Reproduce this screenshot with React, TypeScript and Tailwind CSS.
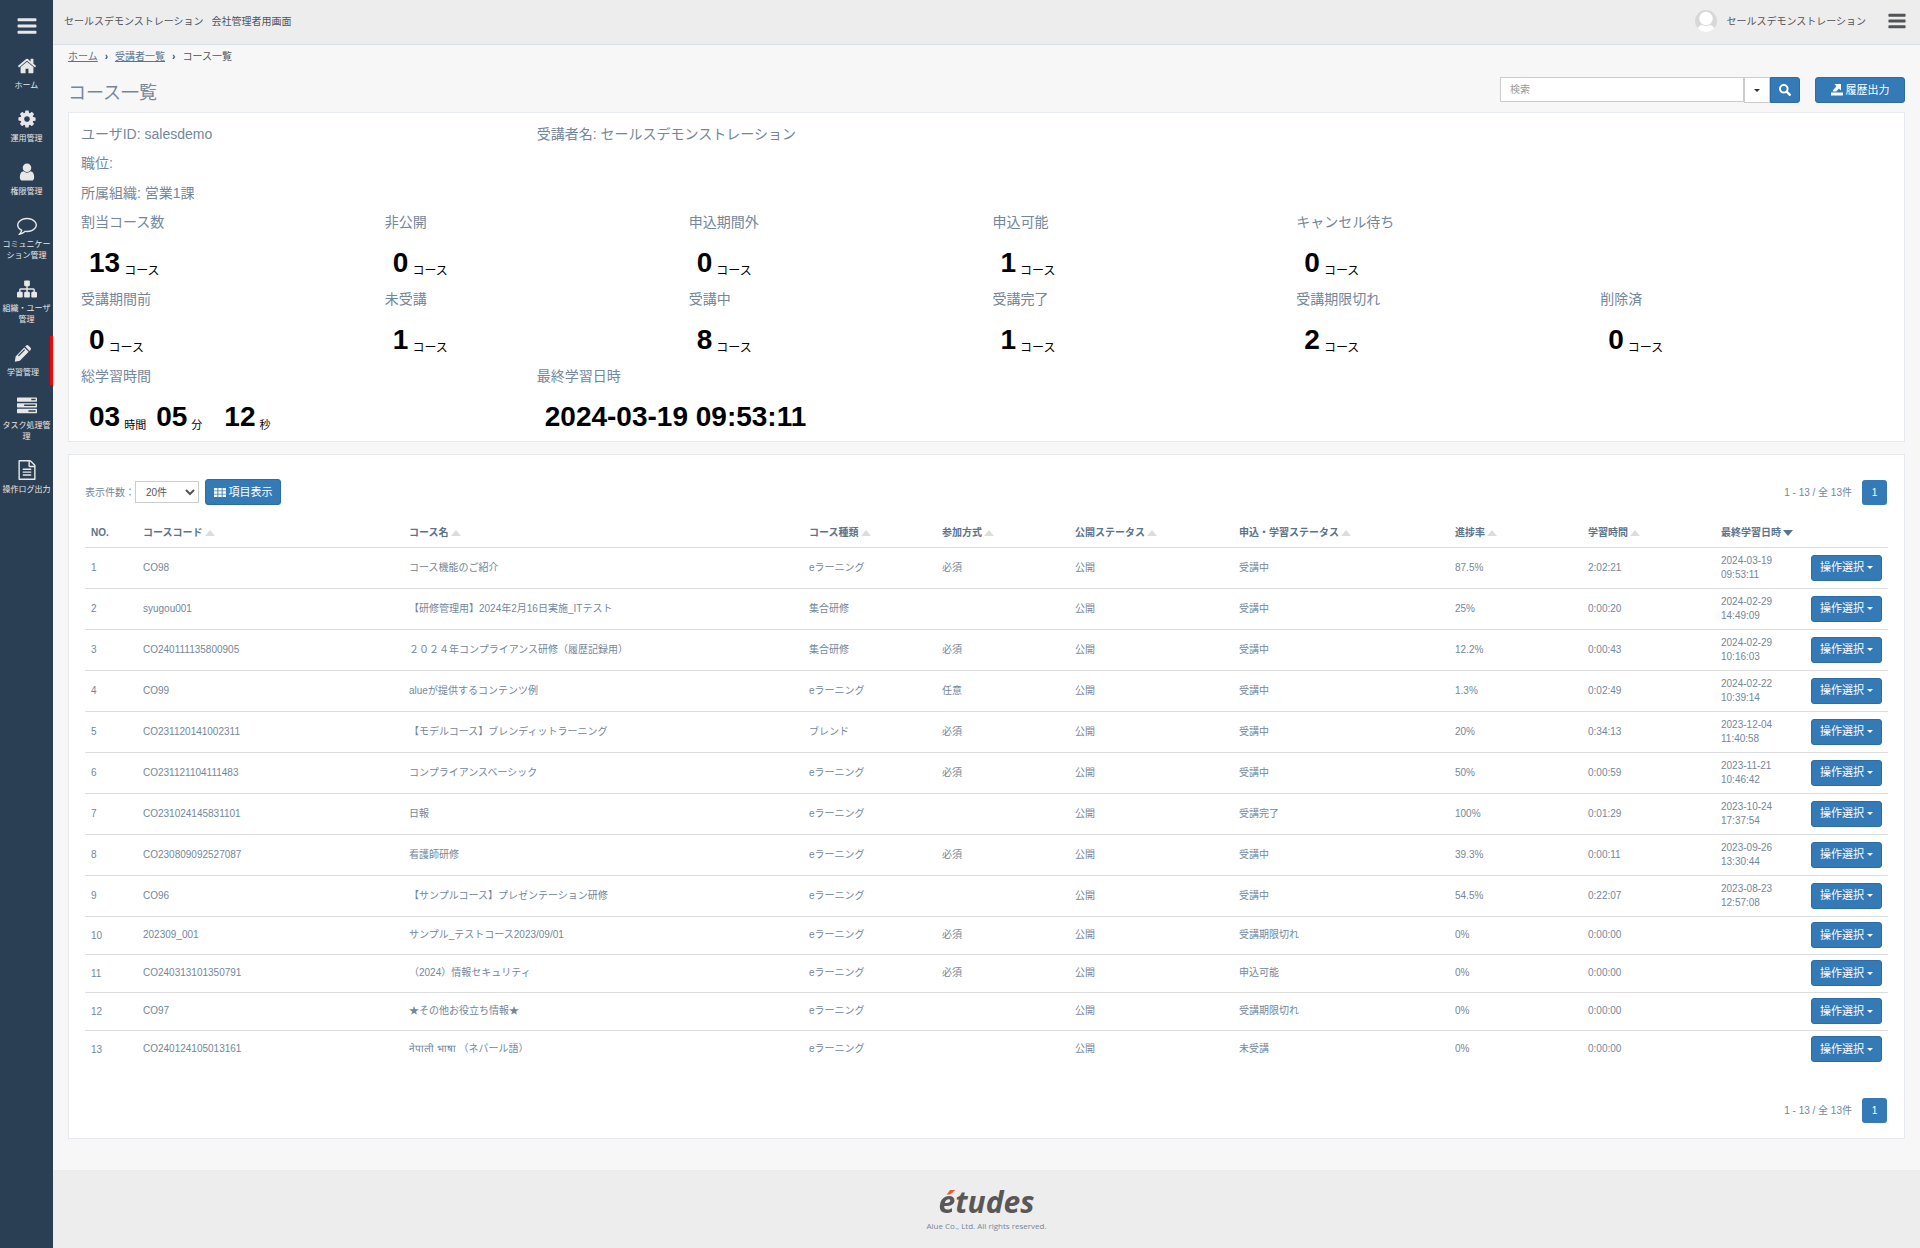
import type { ReactNode } from "react";

const paths = {
    bars: "M1664 1344v128q0 26-19 45t-45 19h-1408q-26 0-45-19t-19-45v-128q0-26 19-45t45-19h1408q26 0 45 19t19 45zm0-512v128q0 26-19 45t-45 19h-1408q-26 0-45-19t-19-45v-128q0-26 19-45t45-19h1408q26 0 45 19t19 45zm0-512v128q0 26-19 45t-45 19h-1408q-26 0-45-19t-19-45v-128q0-26 19-45t45-19h1408q26 0 45 19t19 45z",
    home: "M1472 992v480q0 26-19 45t-45 19h-384v-384h-256v384h-384q-26 0-45-19t-19-45v-480q0-1 .5-3t.5-3l575-474 575 474q1 2 1 6zm223-69l-62 74q-8 9-21 11h-3q-13 0-21-7l-692-577-692 577q-12 8-24 7-13-2-21-11l-62-74q-8-10-7-23.5t11-21.5l719-599q32-26 76-26t76 26l244 204v-195q0-14 9-23t23-9h192q14 0 23 9t9 23v408l219 182q10 8 11 21.5t-7 23.5z",
    cog: "M1152 896q0-106-75-181t-181-75-181 75-75 181 75 181 181 75 181-75 75-181zm512-109v222q0 12-8 23t-20 13l-185 28q-19 54-39 91 35 50 107 138 10 12 10 25t-9 23q-27 37-99 108t-94 71q-12 0-26-9l-138-108q-44 23-91 38-16 136-29 186-7 28-36 28h-222q-14 0-24.5-8.5t-11.5-21.5l-28-184q-49-16-90-37l-141 107q-10 9-25 9-14 0-25-11-126-114-165-168-7-10-7-23 0-12 8-23 15-21 51-66.5t54-70.5q-27-50-41-99l-183-27q-13-2-21-12.5t-8-23.5v-222q0-12 8-23t19-13l186-28q14-46 39-92-40-57-107-138-10-12-10-24 0-10 9-23 26-36 98.5-107.5t94.5-71.5q13 0 26 10l138 107q44-23 91-38 16-136 29-186 7-28 36-28h222q14 0 24.5 8.5t11.5 21.5l28 184q49 16 90 37l142-107q9-9 24-9 13 0 25 10 129 119 165 170 7 8 7 22 0 12-8 23-15 21-51 66.5t-54 70.5q26 50 41 98l183 28q13 2 21 12.5t8 23.5z",
    user: "M1536 1399q0 109-62.5 187t-150.5 78h-854q-88 0-150.5-78t-62.5-187q0-85 8.5-160.5t31.5-152 58.5-131 94-89 134.5-34.5q131 128 313 128t313-128q76 0 134.5 34.5t94 89 58.5 131 31.5 152 8.5 160.5zm-256-887q0 159-112.5 271.5t-271.5 112.5-271.5-112.5-112.5-271.5 112.5-271.5 271.5-112.5 271.5 112.5 112.5 271.5z",
    comment: "M896 384q-204 0-381.5 69.5t-282 187.5-104.5 255q0 112 71.5 213.5t201.5 175.5l87 50-27 96q-24 91-70 172 152-63 275-171l43-38 57 6q69 8 130 8 204 0 381.5-69.5t282-187.5 104.5-255-104.5-255-282-187.5-381.5-69.5zm896 512q0 174-120 321.5t-326 233-450 85.5q-70 0-145-8-198 175-460 242-49 14-114 22h-5q-15 0-27-10.5t-16-27.5v-1q-3-4-.5-12t2-10 4.5-9.5l6-9 7-8.5 8-9q7-8 31-34.5t34.5-38 31-39.5 32.5-51 27-59 26-76q-157-89-247.5-220t-90.5-281q0-174 120-321.5t326-233 450-85.5 450 85.5 326 233 120 321.5z",
    sitemap: "M1792 1248v320q0 40-28 68t-68 28h-320q-40 0-68-28t-28-68v-320q0-40 28-68t68-28h96v-192h-512v192h96q40 0 68 28t28 68v320q0 40-28 68t-68 28h-320q-40 0-68-28t-28-68v-320q0-40 28-68t68-28h96v-192h-512v192h96q40 0 68 28t28 68v320q0 40-28 68t-68 28h-320q-40 0-68-28t-28-68v-320q0-40 28-68t68-28h96v-192q0-52 38-90t90-38h512v-192h-96q-40 0-68-28t-28-68v-320q0-40 28-68t68-28h320q40 0 68 28t28 68v320q0 40-28 68t-68 28h-96v192h512q52 0 90 38t38 90v192h96q40 0 68 28t28 68z",
    pencil: "M1180 230q90-95 190-5l205 205q90 95 0 190l-90 90-395-395zM1010 395l395 395-790 790-455 110 75-490zM1010 560l-560 560 75 75 560-560z",
    tasks: "M1024 1408h640v-128h-640v128zm-384-512h1024v-128h-1024v128zm640-512h384v-128h-384v128zm512 832v256q0 26-19 45t-45 19h-1664q-26 0-45-19t-19-45v-256q0-26 19-45t45-19h1664q26 0 45 19t19 45zm0-512v256q0 26-19 45t-45 19h-1664q-26 0-45-19t-19-45v-256q0-26 19-45t45-19h1664q26 0 45 19t19 45zm0-512v256q0 26-19 45t-45 19h-1664q-26 0-45-19t-19-45v-256q0-26 19-45t45-19h1664q26 0 45 19t19 45z",
    file: "M1596 380q28 28 48 76t20 88v1152q0 40-28 68t-68 28h-1344q-40 0-68-28t-28-68v-1600q0-40 28-68t68-28h896q40 0 88 20t76 48zm-444-244v376h376q-10-29-22-41l-313-313q-12-12-41-22zm384 1528v-1024h-416q-40 0-68-28t-28-68v-416h-768v1536h1280zm-1024-864q0-14 9-23t23-9h704q14 0 23 9t9 23v64q0 14-9 23t-23 9h-704q-14 0-23-9t-9-23v-64zm736 224q14 0 23 9t9 23v64q0 14-9 23t-23 9h-704q-14 0-23-9t-9-23v-64q0-14 9-23t23-9h704zm0 256q14 0 23 9t9 23v64q0 14-9 23t-23 9h-704q-14 0-23-9t-9-23v-64q0-14 9-23t23-9h704z",
};

type IconName = keyof typeof paths;

function Icon({ name, className }: { name: IconName; className?: string }) {
    return (
        <svg viewBox="0 0 1792 1792" fill="currentColor" fillRule={name === "pencil" ? "evenodd" : "nonzero"} aria-hidden="true" className={className}>
            <path d={paths[name]} />
        </svg>
    );
}

const menu: { icon: IconName; lines: string[]; active?: boolean }[] = [
    { icon: "home", lines: ["ホーム"] },
    { icon: "cog", lines: ["運用管理"] },
    { icon: "user", lines: ["権限管理"] },
    { icon: "comment", lines: ["コミュニケー", "ション管理"] },
    { icon: "sitemap", lines: ["組織・ユーザ", "管理"] },
    { icon: "pencil", lines: ["学習管理"], active: true },
    { icon: "tasks", lines: ["タスク処理管", "理"] },
    { icon: "file", lines: ["操作ログ出力"] },
];

function Sidebar() {
    return (
        <nav className="w-[53px] shrink-0 bg-[#2a3f54] text-[#e7e7e7]">
            <button type="button" aria-label="メニュー" className="flex h-[45px] w-full items-center justify-center pt-[6px]">
                <Icon name="bars" className="h-[22px] w-[22px]" />
            </button>
            {menu.map((item) => (
                <a
                    key={item.icon}
                    href="#"
                    className={`my-1 flex flex-col items-center border-r-3 pt-[6px] pb-[7px] text-[8px] leading-[11px] ${item.active ? "border-[#ff0000] pr-1" : "border-transparent pl-[3px]"}`}
                >
                    <Icon name={item.icon} className="mb-[3px] h-[22px] w-5" />
                    {item.lines.map((line) => (
                        <span key={line} className="whitespace-nowrap">{line}</span>
                    ))}
                </a>
            ))}
        </nav>
    );
}

function Header() {
    return (
        <header className="flex h-[45px] items-center justify-between border-b border-[#d9dee4] bg-[#ededed] pr-[13px] pb-[2px] pl-[11px] text-[10px] text-[#515356]">
            <div className="flex gap-2">
                <span>セールスデモンストレーション</span>
                <span>会社管理者用画面</span>
            </div>
            <div className="flex items-center">
                <svg viewBox="0 0 22 22" className="mr-[9px] h-[22px] w-[22px]" aria-hidden="true">
                    <clipPath id="avatar"><circle cx="11" cy="11" r="11" /></clipPath>
                    <g clipPath="url(#avatar)">
                        <rect width="22" height="22" fill="#d8d8d8" />
                        <circle cx="11" cy="8.5" r="6.7" fill="#fff" />
                        <path d="M2 22c0-4 2.500-7 5-7 2.500 1.500 5.500 1.500 8 0 2.500 0 5 3 5 7z" fill="#fff" />
                    </g>
                </svg>
                <span>セールスデモンストレーション</span>
                <button type="button" aria-label="設定" className="ml-[21px]">
                    <Icon name="bars" className="h-5 w-5" />
                </button>
            </div>
        </header>
    );
}

function Caret() {
    return <span className="inline-block border-x-3 border-t-3 border-x-transparent border-t-current" />;
}

const blueButton = "flex h-[26px] items-center justify-center gap-[3px] rounded-[3px] border border-[#2e6da4] bg-[#337ab7] text-[11px] text-white";

function Stat({ label, children }: { label: string; children: ReactNode }) {
    return (
        <div>
            <dt className="leading-5">{label}</dt>
            <dd className="pt-[5px] pl-2 text-[28px] leading-[52px] font-bold text-black">{children}</dd>
        </div>
    );
}

function Unit({ children, small }: { children: string; small?: boolean }) {
    return <sub className={`ml-1 font-normal ${small ? "text-[11px]" : "text-xs"}`}>{children}</sub>;
}

const counts: [string, number][][] = [
    [["割当コース数", 13], ["非公開", 0], ["申込期間外", 0], ["申込可能", 1], ["キャンセル待ち", 0]],
    [["受講期間前", 0], ["未受講", 1], ["受講中", 8], ["受講完了", 1], ["受講期限切れ", 2], ["削除済", 0]],
];

function Summary() {
    return (
        <section className="mb-3 h-[330px] border border-[#e6e9ed] bg-white pl-3 text-sm text-[#73879c]">
            <div className="grid grid-cols-4 pt-[6px] leading-[30px]">
                <p>ユーザID: salesdemo</p>
                <p>受講者名: セールスデモンストレーション</p>
            </div>
            <p className="leading-[29px]">職位:</p>
            <p className="mb-1 leading-[30px]">所属組織: 営業1課</p>
            {counts.map((row) => (
                <dl key={row[0][0]} className="grid grid-cols-6">
                    {row.map(([label, n]) => (
                        <Stat key={label} label={label}>{n}<Unit>コース</Unit></Stat>
                    ))}
                </dl>
            ))}
            <dl className="grid grid-cols-4">
                <Stat label="総学習時間">
                    03<Unit small>時間</Unit>
                    <span className="ml-[10px]">05</span><Unit small>分</Unit>
                    <span className="ml-[22px]">12</span><Unit small>秒</Unit>
                </Stat>
                <Stat label="最終学習日時">2024-03-19 09:53:11</Stat>
            </dl>
        </section>
    );
}

const columns = [
    { label: "NO.", width: "w-[52px]" },
    { label: "コースコード", width: "w-[266px]", sort: "up" },
    { label: "コース名", width: "w-[400px]", sort: "up" },
    { label: "コース種類", width: "w-[133px]", sort: "up" },
    { label: "参加方式", width: "w-[133px]", sort: "up" },
    { label: "公開ステータス", width: "w-[164px]", sort: "up" },
    { label: "申込・学習ステータス", width: "w-[216px]", sort: "up" },
    { label: "進捗率", width: "w-[133px]", sort: "up" },
    { label: "学習時間", width: "w-[133px]", sort: "up" },
    { label: "最終学習日時", width: "w-[90px]", sort: "down" },
];

const rows = [
    ["CO98", "コース機能のご紹介", "eラーニング", "必須", "公開", "受講中", "87.5%", "2:02:21", "2024-03-19 09:53:11"],
    ["syugou001", "【研修管理用】2024年2月16日実施_ITテスト", "集合研修", "", "公開", "受講中", "25%", "0:00:20", "2024-02-29 14:49:09"],
    ["CO240111135800905", "２０２４年コンプライアンス研修（履歴記録用）", "集合研修", "必須", "公開", "受講中", "12.2%", "0:00:43", "2024-02-29 10:16:03"],
    ["CO99", "alueが提供するコンテンツ例", "eラーニング", "任意", "公開", "受講中", "1.3%", "0:02:49", "2024-02-22 10:39:14"],
    ["CO231120141002311", "【モデルコース】ブレンディットラーニング", "ブレンド", "必須", "公開", "受講中", "20%", "0:34:13", "2023-12-04 11:40:58"],
    ["CO231121104111483", "コンプライアンスベーシック", "eラーニング", "必須", "公開", "受講中", "50%", "0:00:59", "2023-11-21 10:46:42"],
    ["CO231024145831101", "日報", "eラーニング", "", "公開", "受講完了", "100%", "0:01:29", "2023-10-24 17:37:54"],
    ["CO230809092527087", "看護師研修", "eラーニング", "必須", "公開", "受講中", "39.3%", "0:00:11", "2023-09-26 13:30:44"],
    ["CO96", "【サンプルコース】プレゼンテーション研修", "eラーニング", "", "公開", "受講中", "54.5%", "0:22:07", "2023-08-23 12:57:08"],
    ["202309_001", "サンプル_テストコース2023/09/01", "eラーニング", "必須", "公開", "受講期限切れ", "0%", "0:00:00", ""],
    ["CO240313101350791", "（2024）情報セキュリティ", "eラーニング", "必須", "公開", "申込可能", "0%", "0:00:00", ""],
    ["CO97", "★その他お役立ち情報★", "eラーニング", "", "公開", "受講期限切れ", "0%", "0:00:00", ""],
    ["CO240124105013161", "नेपाली भाषा （ネパール語）", "eラーニング", "", "公開", "未受講", "0%", "0:00:00", ""],
];

function CourseTable() {
    return (
        <table className="w-full table-fixed text-left">
            <thead>
                <tr className="h-7 text-[#5a738e]">
                    {columns.map((col) => (
                        <th key={col.label} className={`${col.width} pl-[6px] font-bold whitespace-nowrap`}>
                            {col.label}
                            {col.sort === "up" && <span className="ml-[2px] inline-block border-x-5 border-b-6 border-x-transparent border-b-[#ddd]" />}
                            {col.sort === "down" && <span className="ml-[2px] inline-block border-x-5 border-t-6 border-x-transparent border-t-[#5a738e]" />}
                        </th>
                    ))}
                    <th />
                </tr>
            </thead>
            <tbody>
                {rows.map((row, i) => (
                    <tr key={row[0]} className={`border-t border-[#ddd] ${row[8] ? "h-[41px]" : "h-[38px]"}`}>
                        <td className="pl-[6px]">{i + 1}</td>
                        {row.map((cell, j) => (
                            <td key={j} className="pl-[6px] leading-[14px]">{cell}</td>
                        ))}
                        <td className="pl-[6px]">
                            <button type="button" className={`${blueButton} w-[71px]`}>操作選択<Caret /></button>
                        </td>
                    </tr>
                ))}
            </tbody>
        </table>
    );
}

function Pager() {
    return (
        <div className="flex items-center gap-[10px] pr-px">
            <span>1 - 13 / 全 13件</span>
            <a href="#" className="flex h-[25px] w-[25px] items-center justify-center rounded-[3px] bg-[#337ab7] text-white">1</a>
        </div>
    );
}

function App() {
    return (
        <div className="flex min-h-screen bg-[#f7f7f7] font-['Liberation_Sans','Noto_Sans_CJK_JP',sans-serif] text-[10px] text-[#73879c]">
            <Sidebar />
            <div className="flex min-w-0 flex-1 flex-col">
                <Header />
                <main className="flex-1 px-[15px] pb-[31px]">
                    <div className="flex h-[22px] items-center gap-[7px] text-[#515356]">
                        <a href="#" className="text-[#5a738e] underline">ホーム</a>
                        <span className="font-bold text-[#2a4f84]">›</span>
                        <a href="#" className="text-[#5a738e] underline">受講者一覧</a>
                        <span className="font-bold text-[#2a4f84]">›</span>
                        <span>コース一覧</span>
                    </div>
                    <div className="flex h-[45px] items-start justify-between pt-[10px]">
                        <h1 className="text-[18px] leading-8">コース一覧</h1>
                        <div className="flex">
                            <input type="text" aria-label="検索" placeholder="検索" className="h-[25px] w-[244px] border border-[#ccc] bg-white px-[9px] placeholder:text-[#999]" />
                            <button type="button" aria-label="検索条件" className="flex h-[26px] w-[26px] items-center justify-center border border-[#ccc] bg-white text-[#333]"><Caret /></button>
                            <button type="button" aria-label="検索する" className={`${blueButton} w-[30px] rounded-l-none`}>
                                <svg viewBox="0 0 12 12" className="h-3 w-3" fill="none" stroke="currentColor" strokeWidth="2">
                                    <circle cx="4.800" cy="4.800" r="3.800" />
                                    <path d="M7.500 7.500l4 4" strokeWidth="2.400" />
                                </svg>
                            </button>
                            <button type="button" className={`${blueButton} ml-[15px] w-[90px]`}>
                                <svg viewBox="0 0 12 12" className="h-3 w-3" fill="currentColor">
                                    <path d="M0 8.500h12v3H0zM3.500 0h6.500v6.500L8 4.600 5.200 7.500H2L1.800 6.500 5.500 2.200z" />
                                </svg>
                                履歴出力
                            </button>
                        </div>
                    </div>
                    <Summary />
                    <section className="border border-[#e6e9ed] bg-white px-4 pt-6 pb-[15px]">
                        <div className="mb-[14px] flex items-center justify-between">
                            <div className="flex items-center">
                                <label htmlFor="per-page">表示件数：</label>
                                <select id="per-page" className="h-[22px] w-16 border border-[#ccc] bg-white pl-[6px] text-[#555]">
                                    <option>20件</option>
                                </select>
                                <button type="button" className={`${blueButton} ml-[6px] w-[76px]`}>
                                    <svg viewBox="0 0 12 9" className="h-[9px] w-3" fill="currentColor">
                                        <path d="M0 0h3.400v2.400H0zM4.300 0h3.400v2.400H4.300zM8.600 0H12v2.400H8.600zM0 3.300h3.400v2.400H0zM4.300 3.300h3.400v2.400H4.300zM8.600 3.300H12v2.400H8.600zM0 6.600h3.400V9H0zM4.300 6.600h3.400V9H4.300zM8.600 6.600H12V9H8.600z" />
                                    </svg>
                                    項目表示
                                </button>
                            </div>
                            <Pager />
                        </div>
                        <CourseTable />
                        <div className="mt-[30px] flex justify-end">
                            <Pager />
                        </div>
                    </section>
                </main>
                <footer className="flex h-[78px] flex-col items-center bg-[#ededed] pt-4">
                    <div className="font-['Open_Sans',sans-serif] text-[30px] leading-8 font-bold text-[#595757] italic">
                        {/* the accent is orange, the letter under it grey */}
                        <span className="bg-linear-to-b from-[#f15a31] from-36% to-[#595757] to-36% bg-clip-text text-transparent">é</span>tudes
                    </div>
                    <p className="font-['Open_Sans',sans-serif] text-[8px] leading-4">Alue Co., Ltd. All rights reserved.</p>
                </footer>
            </div>
        </div>
    );
}

export default App;
